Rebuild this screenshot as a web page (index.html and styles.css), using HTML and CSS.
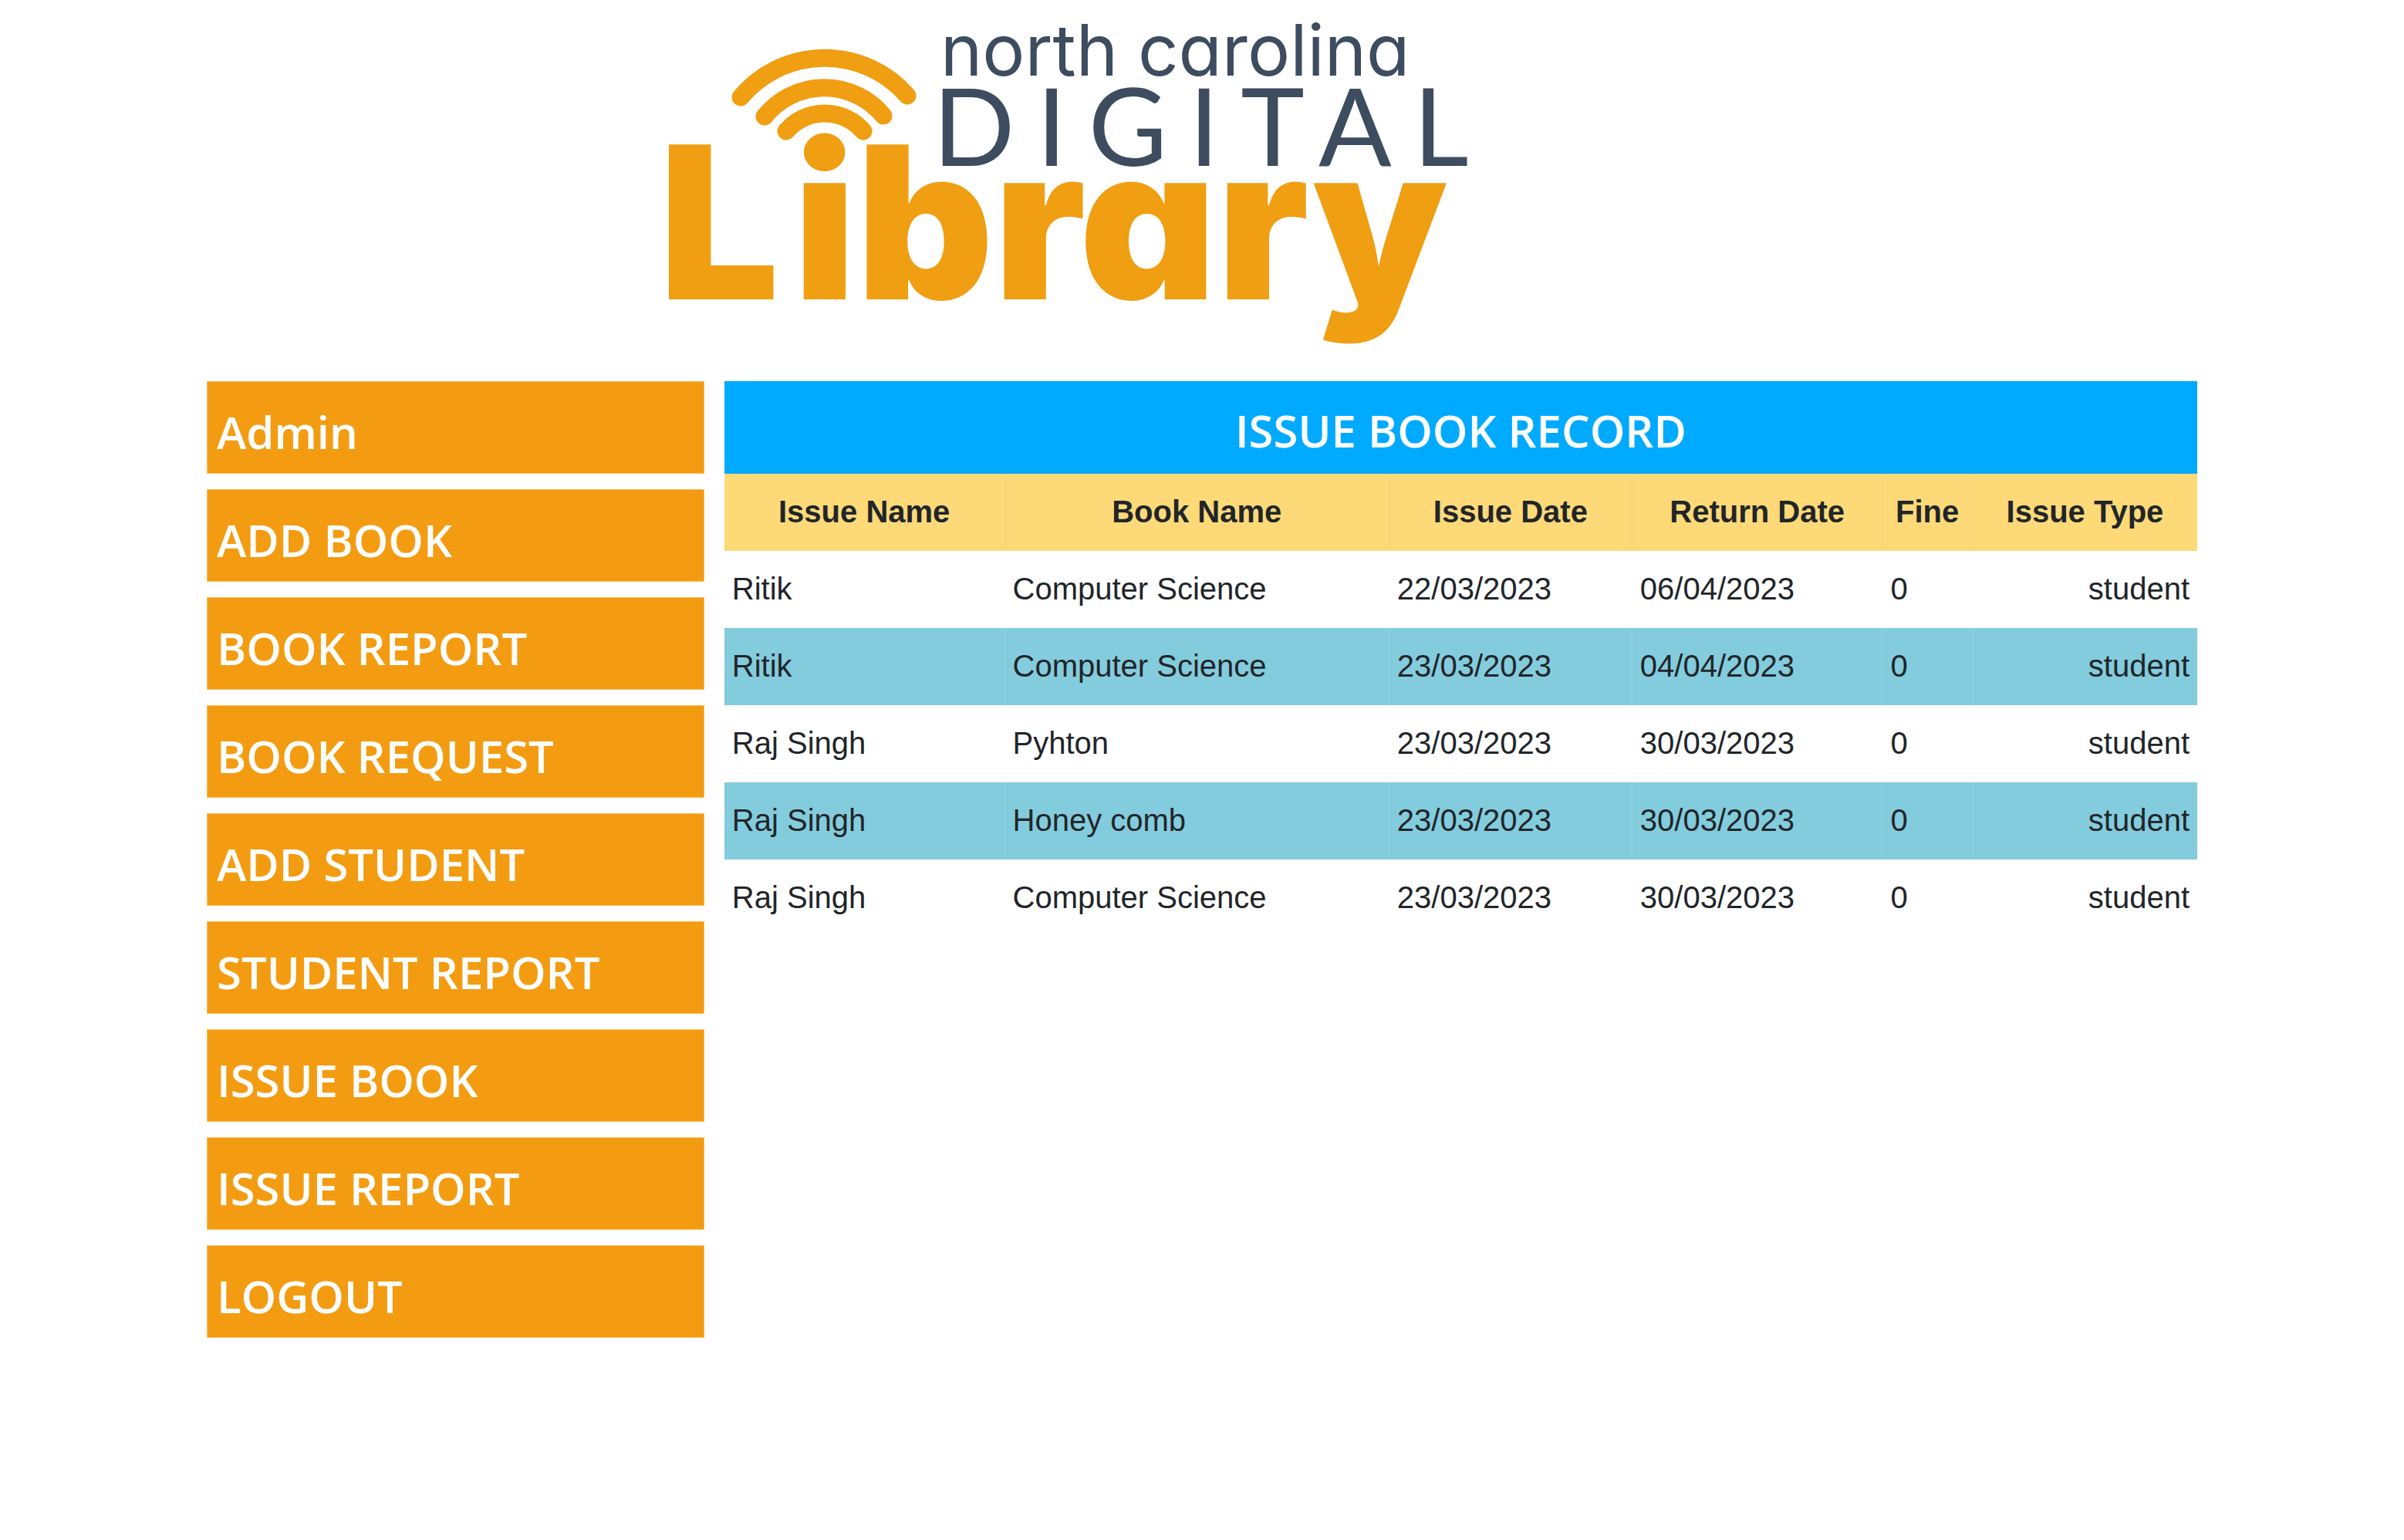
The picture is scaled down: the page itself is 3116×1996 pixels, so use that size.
FILE: index.html
```html
<!DOCTYPE html>
<html lang="en">
<head>
<meta charset="utf-8">
<title>Issue Book Record</title>
<link rel="stylesheet" href="styles.css">
</head>
<body>
<div class="container">
  <header class="header">
    <svg class="logo" viewBox="838 0 1120 474" role="img" aria-label="North Carolina Digital Library">
      <g class="logo-waves">
        <path d="M960 126A142 142 0 0 1 1176 124"/>
        <path d="M991 151A99 99 0 0 1 1145 150"/>
        <path d="M1019 170A66 66 0 0 1 1119 170"/>
      </g>
      <text class="logo-state" x="1219" y="98">north carolina</text>
      <text class="logo-digital" x="1209" y="215">DIGITAL</text>
      <text class="logo-library" x="854" y="388">L<tspan x="1028">ibrary</tspan></text>
    </svg>
  </header>
  <div class="columns">
    <nav class="sidebar">
      <button class="menu-button" type="button">Admin</button>
      <button class="menu-button" type="button">ADD BOOK</button>
      <button class="menu-button" type="button">BOOK REPORT</button>
      <button class="menu-button" type="button">BOOK REQUEST</button>
      <button class="menu-button" type="button">ADD STUDENT</button>
      <button class="menu-button" type="button">STUDENT REPORT</button>
      <button class="menu-button" type="button">ISSUE BOOK</button>
      <button class="menu-button" type="button">ISSUE REPORT</button>
      <button class="menu-button" type="button">LOGOUT</button>
    </nav>
    <main class="content">
      <h1 class="title">ISSUE BOOK RECORD</h1>
      <table class="records">
        <colgroup>
          <col class="col-name"><col class="col-book"><col class="col-issued"><col class="col-return"><col class="col-fine"><col class="col-type">
        </colgroup>
        <thead>
          <tr><th>Issue Name</th><th>Book Name</th><th>Issue Date</th><th>Return Date</th><th>Fine</th><th>Issue Type</th></tr>
        </thead>
        <tbody>
          <tr><td>Ritik</td><td>Computer Science</td><td>22/03/2023</td><td>06/04/2023</td><td>0</td><td>student</td></tr>
          <tr><td>Ritik</td><td>Computer Science</td><td>23/03/2023</td><td>04/04/2023</td><td>0</td><td>student</td></tr>
          <tr><td>Raj Singh</td><td>Pyhton</td><td>23/03/2023</td><td>30/03/2023</td><td>0</td><td>student</td></tr>
          <tr><td>Raj Singh</td><td>Honey comb</td><td>23/03/2023</td><td>30/03/2023</td><td>0</td><td>student</td></tr>
          <tr><td>Raj Singh</td><td>Computer Science</td><td>23/03/2023</td><td>30/03/2023</td><td>0</td><td>student</td></tr>
        </tbody>
      </table>
    </main>
  </div>
</div>
</body>
</html>
```
FILE: styles.css
```css
* { box-sizing: border-box; }
body {
  margin: 0;
  background: #fff;
  color: #212529;
  font-family: "Liberation Sans", Arial, sans-serif;
  font-size: 40px;
}
.container { max-width: 2580px; margin: 0 auto; }
.header { padding: 0 0 20px 570px; }
.logo { display: block; width: 1120px; max-width: 100%; }
.logo-waves { fill: none; stroke: #f09e12; stroke-width: 23; stroke-linecap: round; }
.logo text { font-family: Inter, sans-serif; font-feature-settings: "cv11"; fill: #3d4c5f; }
.logo .logo-state { font-size: 92px; }
.logo .logo-digital { font-family: Lato, sans-serif; font-size: 140px; letter-spacing: 28px; }
.logo .logo-library { font-size: 276px; font-weight: 900; fill: #f09e12; }

.columns { display: flex; justify-content: space-between; align-items: flex-start; }
.sidebar { width: 25%; display: flex; flex-direction: column; gap: 20px; }
.menu-button, .title {
  margin: 0;
  padding: 12px 12px 0;
  height: 120px;
  border: 1px solid #f7bd60;
  background: #f39c12;
  color: #fff;
  font-family: "Open Sans", "Noto Sans", sans-serif;
  font-size: 58px;
  font-weight: 600;
  line-height: 104px;
  text-align: left;
}
.content { width: 74%; }
.title { border: 0; background: #00aaff; text-align: center; }

.records { width: 100%; table-layout: fixed; border-collapse: separate; border-spacing: 0; }
.col-name { width: 19%; }
.col-book { width: 26.1%; }
.col-issued { width: 16.5%; }
.col-return { width: 17%; }
.col-fine { width: 6.1%; }
.col-type { width: 15.3%; }
.records th, .records td { height: 100px; padding: 0 10px 2px; text-align: left; }
.records th { background: #fdd978; text-align: center; }
.records th + th { border-left: 1px solid #f0d588; }
.records td:last-child { text-align: right; }
.records tbody tr:nth-child(even) { background: #83ccdd; }
.records tbody tr:nth-child(even) td + td { border-left: 1px solid #92d3e1; }
.records tbody tr:nth-child(odd) td + td { border-left: 1px solid #fff; }
```
